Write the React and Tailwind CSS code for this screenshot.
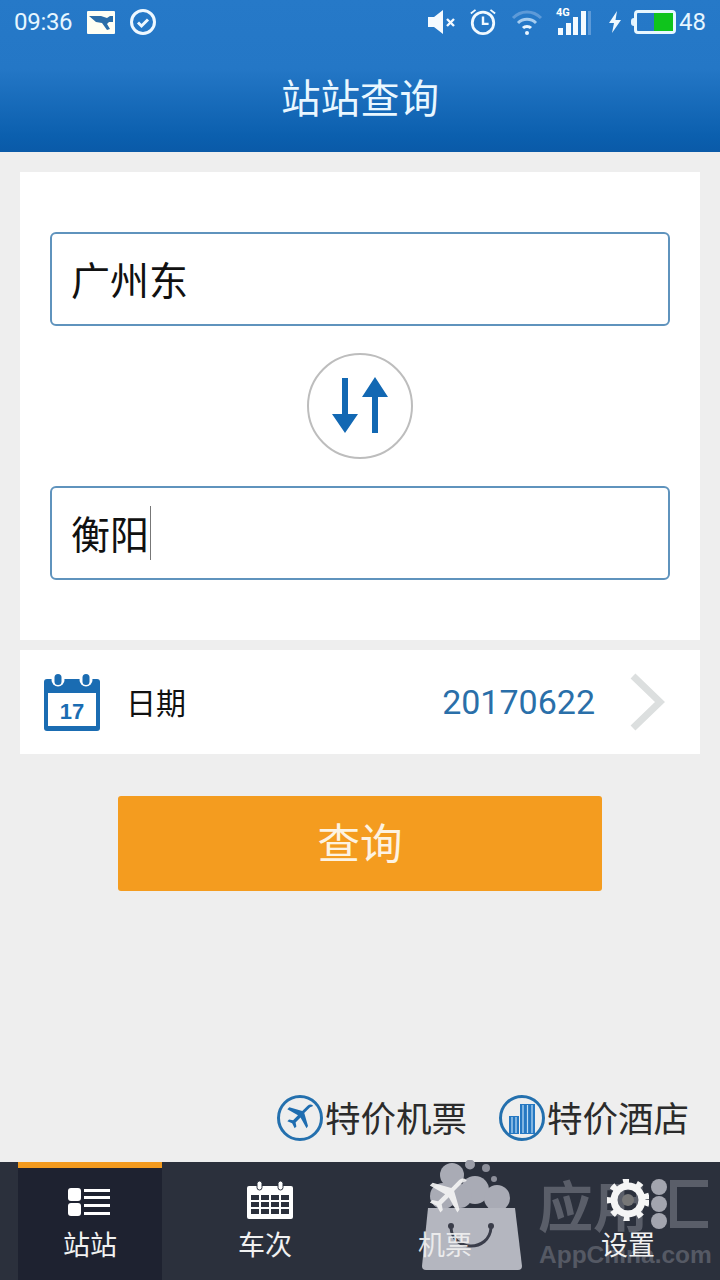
const cjk = { fontFamily: '"Noto Sans CJK SC","Liberation Sans",sans-serif' };

function Status() {
  return (
    <div className="h-[44px] flex items-center justify-between pl-[14px] pr-[14px] text-[#e6f6ff]">
      <div className="flex items-center">
        <span className="text-[24px] leading-none tracking-[-0.3px]" style={{ fontFamily: 'Roboto, sans-serif' }}>09:36</span>
        <svg className="ml-[15px]" width="28" height="23" viewBox="0 0 28 23">
          <rect x="0" y="0" width="28" height="23" rx="1" fill="#fffff4" />
          <path d="M2 5h12l6 2 3-2 3 0 0 6-4 0-2 2 3 5-3 1-5-7-6-1z" fill="#2b6ea9" />
        </svg>
        <svg className="ml-[14px]" width="28" height="28" viewBox="0 0 28 28" fill="none">
          <circle cx="14" cy="14" r="11.5" stroke="#eef8ff" strokeWidth="3" />
          <path d="M9 14.5l3.5 3.5 6.5-6.5" stroke="#eef8ff" strokeWidth="3" />
        </svg>
      </div>
      <div className="flex items-center">
        <svg width="30" height="26" viewBox="0 0 30 26">
          <path d="M1 8h6l9-7v24l-9-7H1z" fill="#f4faff" />
          <path d="M20 10l7 7M27 10l-7 7" stroke="#f4faff" strokeWidth="2.4" />
        </svg>
        <svg className="ml-[12px]" width="28" height="30" viewBox="0 0 30 30" fill="none">
          <circle cx="15" cy="16" r="11.5" stroke="#f0f9ff" strokeWidth="3" />
          <path d="M15 9v8h6" stroke="#f0f9ff" strokeWidth="2.6" />
          <path d="M2 6l5-4M28 6l-5-4" stroke="#f0f9ff" strokeWidth="2" />
        </svg>
        <svg className="ml-[14px]" width="32" height="26" viewBox="0 0 32 26" fill="none">
          <path d="M2 9c8-8 20-8 28 0" stroke="#5d9ad8" strokeWidth="3" />
          <path d="M7 14c5-5 13-5 18 0" stroke="#a6cdf0" strokeWidth="3" />
          <path d="M12 19c2-2 6-2 8 0" stroke="#eaf6ff" strokeWidth="3" />
          <circle cx="16" cy="24" r="2" fill="#eaf6ff" />
        </svg>
        <div className="relative ml-[13px] w-[38px] h-[26px] flex items-end gap-[2.5px] pl-[2px]">
          <span className="absolute left-0 top-[-2px] text-[11px] leading-none font-bold text-white" style={{ fontFamily: 'Roboto, sans-serif' }}>4G</span>
          <div className="w-[5px] h-[7px] bg-[#f3faff]" />
          <div className="w-[5px] h-[12px] bg-[#f3faff]" />
          <div className="w-[5px] h-[18px] bg-[#f3faff]" />
          <div className="w-[5px] h-[24px] bg-[#f3faff]" />
          <div className="w-[3px] h-[24px] bg-[#5d9ad8]" />
        </div>
        <svg className="ml-[14px]" width="14" height="22" viewBox="0 0 14 22">
          <path d="M9 0L1 12h5l-2 10 9-13H7.500z" fill="#eef8ff" />
        </svg>
        <div className="ml-[9px] flex items-center">
          <div className="w-[3px] h-[8px] bg-[#dff2ff] rounded-l-sm" />
          <div className="w-[42px] h-[24px] rounded-[4px] border-[3px] border-[#e8f7ff] flex justify-end">
            <div className="w-[19px] h-full bg-[#0fc41c]" />
          </div>
        </div>
        <span className="ml-[3px] text-[24px] leading-none" style={{ fontFamily: 'Roboto, sans-serif' }}>48</span>
      </div>
    </div>
  );
}

function Field({ value, caret }) {
  return (
    <div className="h-[94px] rounded-[6px] border-2 border-[#5f93bd] bg-white flex items-center pl-[19px] text-[39px] text-[#111] leading-none">
      <span className="-translate-y-px">{value}</span>
      {caret && <span className="ml-[1px] w-px h-[54px] bg-[#777]" />}
    </div>
  );
}

function Tab({ label, active, cls, children }) {
  return (
    <div className={cls}>
      <div className={active ? 'h-full bg-[#1e2230] border-t-[6px] border-[#f29a1f] flex flex-col items-center pt-[14px]' : 'h-full flex flex-col items-center pt-[20px]'}>
        <div className="h-[42px] flex items-center justify-center">{children}</div>
        <span className="mt-[2px] text-[27px] leading-[36px] text-[#f1f1f1]">{label}</span>
      </div>
    </div>
  );
}

function Plane({ size, color, cls }) {
  return (
    <svg className={cls} width={size} height={size} viewBox="0 0 24 24" fill={color}>
      <path d="M21.500 2.500c-1-1-2.700-.8-3.800.3l-4 4L4 4 2.500 5.500 10.500 10l-3.700 3.700-3-.6L2.500 14.400l3.600 1.600 1.900 3.600 1.300-1.300-.6-3 3.700-3.700 4.500 8L18 18l-2.800-9.700 4-4c1-1 3.200-.8 2.300-1.800z" />
    </svg>
  );
}

export default function App() {
  return (
    <div className="relative w-[720px] h-[1280px] overflow-hidden bg-[#eeeeee] flex flex-col" style={cjk}>
      <header className="h-[152px] shrink-0 bg-[linear-gradient(180deg,#2679c8_0%,#2477c6_45%,#0b5fae_90%,#0a5aa8_100%)]">
        <Status />
        <div className="h-[108px] flex items-start justify-center pt-[7px]">
          <h1 className="text-[39.500px] leading-[90px] text-[#e9f7ff] font-normal">站站查询</h1>
        </div>
      </header>

      <main className="flex-1 flex flex-col px-[20px] pt-[20px]">
        <section className="h-[468px] bg-white px-[30px] pt-[60px]">
          <Field value="广州东" />
          <div className="h-[160px] flex items-center justify-center">
            <div className="w-[106px] h-[106px] rounded-full border-2 border-[#bdbdbd] bg-white flex items-center justify-center">
              <svg width="60" height="60" viewBox="0 0 60 60" fill="#1268b3">
                <path d="M12 2h6v36h10L15 57 2 38h10z" />
                <path d="M42 57h6V21h10L45 1 32 21h10z" />
              </svg>
            </div>
          </div>
          <Field value="衡阳" caret />
        </section>

        <section className="mt-[10px] h-[104px] bg-white flex items-center pl-[23px] pr-[35px]">
          <svg width="58" height="58" viewBox="0 0 58 58">
            <rect x="1" y="6" width="56" height="52" rx="3" fill="#1a6cb2" />
            <rect x="5" y="20" width="48" height="33" fill="#fff" />
            <circle cx="15" cy="7" r="6.500" fill="#fff" />
            <circle cx="43" cy="7" r="6.500" fill="#fff" />
            <rect x="11.500" y="1" width="7" height="11" rx="3.500" fill="#1a6cb2" />
            <rect x="39.500" y="1" width="7" height="11" rx="3.500" fill="#1a6cb2" />
            <text x="29" y="46" textAnchor="middle" fontSize="22" fontWeight="700" fill="#1a6cb2" fontFamily="Liberation Sans, sans-serif">17</text>
          </svg>
          <span className="ml-[25px] text-[30px] text-[#111] leading-none -translate-y-px">日期</span>
          <span className="ml-auto text-[34px] leading-none text-[#2a6fa9]" style={{ fontFamily: 'Roboto, sans-serif' }}>20170622</span>
          <svg className="ml-[35px]" width="35" height="58" viewBox="0 0 35 58" fill="none">
            <path d="M3 3l27 26L3 55" stroke="#dcdfdf" strokeWidth="7" />
          </svg>
        </section>

        <button className="mt-[42px] mx-[98px] h-[95px] rounded-[3px] bg-[#f49c1f] text-[42.500px] leading-none text-[#fdf3e2] pb-[4px]">查询</button>

        <div className="mt-auto h-[88px] flex items-start justify-end pr-[11px] pt-[21px]">
          <div className="flex items-center">
            <div className="w-[46px] h-[46px] rounded-full border-[3px] border-[#2470ae] flex items-center justify-center">
              <Plane size={32} color="#1f6db0" />
            </div>
            <span className="ml-[2px] text-[35.500px] leading-none text-[#2b2b2b] -translate-y-px">特价机票</span>
            <div className="ml-[32px] w-[46px] h-[46px] rounded-full border-[3px] border-[#2470ae] flex items-center justify-center">
              <svg width="28" height="32" viewBox="0 0 28 32" fill="#2678c2">
                <rect x="1" y="14" width="10" height="18" />
                <rect x="12" y="2" width="15" height="30" />
                <path d="M15 3v28M19.500 3v28M24 3v28M4 15v16M8 15v16" stroke="#bcdcf5" strokeWidth="1.200" />
              </svg>
            </div>
            <span className="ml-[2px] text-[35.500px] leading-none text-[#2b2b2b] -translate-y-px">特价酒店</span>
          </div>
        </div>
      </main>

      <nav className="h-[118px] shrink-0 bg-[#2b303c] grid grid-cols-[180px_170px_190px_176px]">
        <Tab label="站站" active cls="pl-[18px] pr-[18px]">
          <svg width="44" height="30" viewBox="0 0 44 30" fill="#fff" className="-translate-y-px">
            <rect x="0" y="1" width="13" height="13" rx="3" />
            <rect x="0" y="16" width="13" height="13" rx="3" />
            <rect x="16" y="2" width="26" height="3" />
            <rect x="16" y="9" width="26" height="3" />
            <rect x="16" y="17" width="26" height="3" />
            <rect x="16" y="25" width="26" height="3" />
          </svg>
        </Tab>
        <Tab label="车次" cls="">
          <svg width="46" height="38" viewBox="0 0 46 38" fill="#fff" className="translate-x-[5px] -translate-y-[3px]">
            <path d="M2 5h42a2 2 0 012 2v29a2 2 0 01-2 2H2a2 2 0 01-2-2V7a2 2 0 012-2z" />
            <rect x="10" y="0" width="5" height="9" rx="2.500" stroke="#2b303c" strokeWidth="1" />
            <rect x="31" y="0" width="5" height="9" rx="2.500" stroke="#2b303c" strokeWidth="1" />
            <path d="M4 14h8v5H4zM14 14h8v5h-8zM24 14h8v5h-8zM34 14h8v5h-8zM4 21h8v5H4zM14 21h8v5h-8zM24 21h8v5h-8zM34 21h8v5h-8zM4 28h8v5H4zM14 28h8v5h-8zM24 28h8v5h-8zM34 28h8v5h-8z" fill="#2b303c" />
          </svg>
        </Tab>
        <Tab label="机票" cls="relative z-20 opacity-90">
          <Plane size={46} color="#f5f5f5" cls="translate-x-[3px] -translate-y-[5px]" />
        </Tab>
        <Tab label="设置" cls="relative z-20">
          <svg width="42" height="42" viewBox="0 0 42 42" className="-translate-y-[3px]">
            <circle cx="21" cy="21" r="14" fill="none" stroke="#f5f5f5" strokeWidth="7" />
            <circle cx="21" cy="21" r="19" fill="none" stroke="#f5f5f5" strokeWidth="5" strokeDasharray="6 8" />
            <circle cx="21" cy="21" r="6" fill="#777" />
          </svg>
        </Tab>
      </nav>

      <div className="absolute left-[420px] top-[1160px] z-10 w-[300px] h-[120px] pointer-events-none">
        <svg className="absolute left-0 top-0" width="104" height="112" viewBox="0 0 104 112">
          <circle cx="32" cy="15" r="12" fill="#a9abb5" />
          <circle cx="23" cy="36" r="13" fill="#a9abb5" />
          <circle cx="55" cy="30" r="14" fill="#a9abb5" />
          <circle cx="40" cy="36" r="12" fill="#a9abb5" />
          <circle cx="77" cy="38" r="13" fill="#a9abb5" />
          <circle cx="50" cy="4.500" r="5" fill="#9b9da8" />
          <circle cx="66" cy="8" r="4" fill="#8d8f9a" />
          <circle cx="74" cy="19" r="3" fill="#8d8f9a" />
          <path d="M8 48h87l7 58a4 4 0 01-4 4H6a4 4 0 01-4-4z" fill="#b4b6bf" />
          <circle cx="31" cy="66" r="3" fill="#3a3d4a" />
          <circle cx="71" cy="66" r="3" fill="#3a3d4a" />
          <path d="M31 68c2 24 38 24 40 0" fill="none" stroke="#3a3d4a" strokeWidth="3" />
        </svg>
        <div className="absolute left-[118px] top-[16px] flex items-center text-[55px] leading-none font-bold text-[#5a5e69]">
          <span>应</span><span>用</span>
          <span className="flex flex-col gap-[1px] mx-[3px]">
            <i className="block w-[16px] h-[16px] rounded-full bg-[#a3a5af]" />
            <i className="block w-[16px] h-[16px] rounded-full bg-[#a3a5af]" />
            <i className="block w-[16px] h-[16px] rounded-full bg-[#a3a5af]" />
          </span>
          <span className="block w-[38px] h-[48px] border-[7px] border-r-0 border-[#5a5e69]" />
        </div>
        <div className="absolute left-[119px] top-[83px] text-[24.500px] leading-none font-bold text-[#555964]" style={{ fontFamily: '"Liberation Sans",sans-serif' }}>AppChina.com</div>
      </div>
    </div>
  );
}
